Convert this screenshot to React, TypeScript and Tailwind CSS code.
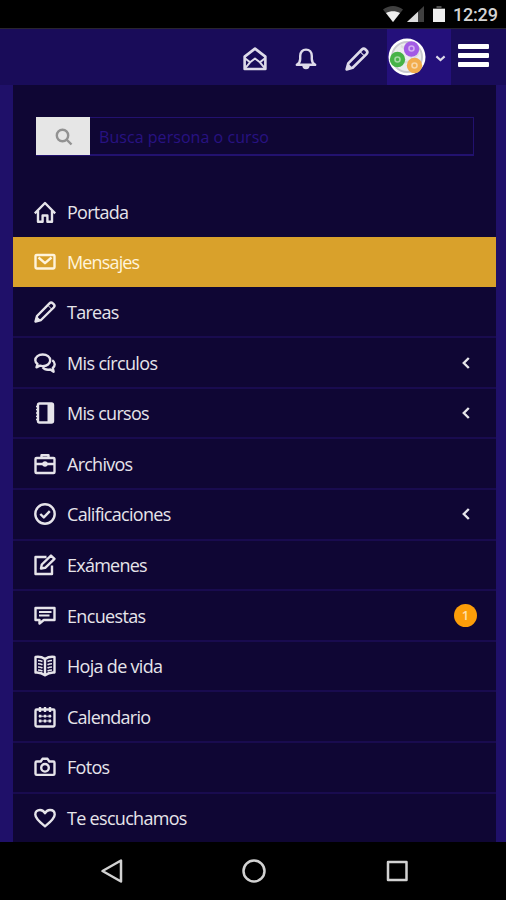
import type { ReactNode } from "react";

type IconName =
  | "home" | "mail" | "pencil" | "chats" | "notebook" | "briefcase" | "check"
  | "edit" | "comment" | "book" | "calendar" | "camera" | "heart" | "mailOpen" | "bell";

const shapes: Record<IconName, ReactNode> = {
  home: (
    <>
      <path d="M.8 12.300 11 2l10.200 10.300" />
      <path d="M4 10v10.700h4.600v-6.200h4.800v6.200H18V10" />
    </>
  ),
  mail: (
    <>
      <rect x="1.500" y="4" width="19" height="13.500" rx="1.200" />
      <path d="m4.500 6.500 6.500 5.700 6.500-5.700" />
    </>
  ),
  pencil: (
    <>
      <path d="M1.500 20.500 3 15 15.500 2.300c1-1 2.300-1 3.300 0l.9.900c1 1 1 2.300 0 3.300L7 19Z" />
      <path d="m14 4.500 3.500 3.500" strokeWidth="1" />
      <path d="m1.500 20.500 1.200-5 3.800 3.800Z" fill="currentColor" strokeWidth="1" />
    </>
  ),
  chats: (
    <>
      <path d="M8.700 2.500c4.300 0 7.500 2.500 7.500 5.800s-3.200 5.800-7.500 5.800c-1 0-1.800-.1-2.700-.4l-3.500 1.600 1-3.300C2.100 11 1.300 9.700 1.300 8.300c0-3.300 3.200-5.800 7.400-5.800Z" />
      <path d="M18.200 8.300c1.600 1 2.500 2.400 2.500 4 0 1.500-.7 2.700-1.900 3.700l.8 3.700-3.300-2.200c-3.200.6-6.200-.3-7.700-2.200" />
    </>
  ),
  notebook: (
    <>
      <rect x="4" y="1.500" width="15" height="19" rx="1.500" />
      <path d="M13.500 2h5v18h-5Z" fill="currentColor" stroke="none" />
      <path d="M2 4.500h3M2 7.700h3M2 11h3M2 14.300h3M2 17.500h3" strokeWidth="1.300" />
    </>
  ),
  briefcase: (
    <>
      <rect x="1.500" y="5" width="19" height="15" rx="1" />
      <path d="M7.500 5V2.300h7V5M2 11h18" />
      <circle cx="11" cy="11" r="2.700" fill="currentColor" stroke="none" />
    </>
  ),
  check: (
    <>
      <circle cx="11" cy="11" r="9.700" />
      <path d="m6.300 11 3.500 3.400 6-6.300" />
    </>
  ),
  edit: (
    <>
      <path d="M12.500 3h-11v17h16.500v-8.500" />
      <path d="m7 14.500.8-4L17 1.600l3.500 3.200-9.300 9Z" />
    </>
  ),
  comment: (
    <>
      <path d="M1.500 3h19v12H9.800L5.500 18.500V15h-4Z" />
      <path d="M5 7h12.500M5 10.500h10.500" strokeWidth="1.800" />
    </>
  ),
  book: (
    <>
      <path d="M11 4C8 2 4.500 1.500 1.500 2v15.500c3-.3 6.500.4 9.500 2.800 3-2.400 6.500-3.100 9.500-2.800V2C17.500 1.500 14 2 11 4Z" />
      <path d="M11 4v16" />
      <path d="M4 5.500c1.500 0 3 .3 4.500 1M4 8.800c1.500 0 3 .3 4.500 1M4 12c1.500 0 3 .3 4.500 1M4 15c1.500 0 3 .3 4.500 1M18 5.500c-1.500 0-3 .3-4.500 1M18 8.800c-1.500 0-3 .3-4.500 1M18 12c-1.500 0-3 .3-4.500 1M18 15c-1.500 0-3 .3-4.500 1" strokeWidth="1.600" />
    </>
  ),
  calendar: (
    <>
      <rect x="1.500" y="3.500" width="19" height="17" rx="1.200" />
      <path d="M6 1v5M11 1v5M16 1v5" />
      <path d="M5 10.200h12M5 15h12" strokeWidth="2.800" strokeDasharray="2.400 2.400" />
      <path d="M4.500 10.200h13M4.500 15h13" strokeWidth="1" />
    </>
  ),
  camera: (
    <>
      <path d="M2.700 5.500h4L8.500 2.800h5l1.800 2.700h4q1.200 0 1.200 1.200v11q0 1.200-1.200 1.200H2.700q-1.200 0-1.200-1.200v-11q0-1.200 1.200-1.200Z" />
      <circle cx="11" cy="11.800" r="3.800" />
    </>
  ),
  heart: (
    <path d="M11 19.300C7 16 1.300 11.800 1.300 7.500c0-2.800 2-4.500 4.700-4.500 2.200 0 4 1.300 5 3.300C12 4.300 13.800 3 16 3c2.700 0 4.700 1.700 4.700 4.500 0 4.300-5.700 8.500-9.700 11.800Z" />
  ),
  mailOpen: (
    <>
      <path d="M1.500 8.800 11 1.500l9.500 7.300v11.400H1.500Z" />
      <path d="m1.500 10 5 4L11 10.500l4.500 3.500 5-4M1.500 20l5-6M20.500 20l-5-6" strokeWidth="1.800" />
    </>
  ),
  bell: (
    <>
      <path d="M1.800 16.800c2.500-1.500 3.400-2.800 3.400-5.800V8c0-3.900 2.300-6.400 5.800-6.400s5.800 2.500 5.800 6.400v3c0 3 .9 4.300 3.400 5.800Z" />
      <path d="M8.500 17.500a2.500 2.500 0 0 0 5 0Z" fill="currentColor" />
    </>
  ),
};

function Icon({ name, className = "size-[22px]" }: { name: IconName; className?: string }) {
  return (
    <svg viewBox="0 0 22 22" className={`${className} shrink-0`} fill="none" stroke="currentColor" strokeWidth="2.4" strokeLinejoin="round">
      {shapes[name]}
    </svg>
  );
}

const items: { icon: IconName; label: string; tracking: string; active?: boolean; arrow?: boolean; badge?: number }[] = [
  { icon: "home", label: "Portada", tracking: "tracking-[-0.75px]" },
  { icon: "mail", label: "Mensajes", tracking: "tracking-[-0.85px]", active: true },
  { icon: "pencil", label: "Tareas", tracking: "tracking-[-0.75px]" },
  { icon: "chats", label: "Mis círculos", tracking: "tracking-[-0.65px]", arrow: true },
  { icon: "notebook", label: "Mis cursos", tracking: "tracking-[-0.7px]", arrow: true },
  { icon: "briefcase", label: "Archivos", tracking: "tracking-[-0.75px]" },
  { icon: "check", label: "Calificaciones", tracking: "tracking-[-0.7px]", arrow: true },
  { icon: "edit", label: "Exámenes", tracking: "tracking-[-0.75px]" },
  { icon: "comment", label: "Encuestas", tracking: "tracking-[-0.65px]", badge: 1 },
  { icon: "book", label: "Hoja de vida", tracking: "tracking-[-0.7px]" },
  { icon: "calendar", label: "Calendario", tracking: "tracking-[-0.75px]" },
  { icon: "camera", label: "Fotos", tracking: "tracking-[-0.7px]" },
  { icon: "heart", label: "Te escuchamos", tracking: "tracking-[-0.7px]" },
];

function StatusBar() {
  return (
    <div className="flex h-7 shrink-0 items-center justify-end bg-black pr-2 text-[#d4d4d4]">
      <svg viewBox="0 0 64 18" className="mr-[-2px] h-[18px] w-16">
        <path d="M0 4.500C6-.3 14-.3 20 4.500L10 17Z" fill="#404040" />
        <path d="M3 8C7-.5 13-.5 17 8L10 17Z" fill="#404040" />
        <path d="M3 8C7.500 5.500 12.500 5.500 17 8L10 17Z" fill="#eee" />
        <path d="M41 1v16H24Z" fill="#404040" />
        <path d="M35 6.800V17H24Z" fill="#ddd" />
        <path d="M53.500 1h5v2H62v3H50V3h3.500Z" fill="#505050" />
        <path d="M50 4h12v13H50Z" fill="#eee" />
      </svg>
      <span className="ml-2 w-[45px] pt-0.5 font-['Roboto'] text-[18px] leading-7 font-medium tracking-[-0.2px] whitespace-nowrap">12:29</span>
    </div>
  );
}

function Avatar() {
  return (
    <svg viewBox="0 0 38 38" className="size-[38px] shrink-0">
      <circle cx="19" cy="19" r="18.500" fill="#fff" />
      <circle cx="19" cy="19" r="15" fill="#ececef" stroke="#c9c9cf" strokeWidth="2" />
      <path d="M13 8c6 3 10 8 12 17M31 15c-5 7-9 9-18 10" fill="none" stroke="#ddd" strokeWidth="2" />
      <circle cx="23.500" cy="11" r="7.700" fill="#a35be5" />
      <circle cx="9.500" cy="21.500" r="7.700" fill="#47b347" />
      <circle cx="26.500" cy="27.500" r="7.700" fill="#f2ad4d" />
      <g fill="none" stroke="#fff" strokeOpacity=".5" strokeWidth="1.600">
        <circle cx="23.500" cy="10.500" r="2.500" />
        <circle cx="9.500" cy="21.500" r="2.500" />
        <circle cx="26.500" cy="27.500" r="2.500" />
      </g>
    </svg>
  );
}

function Header() {
  return (
    <header className="flex h-[57px] shrink-0 items-stretch justify-end border-t border-[#29252f] bg-[#190c59] text-[#dedbea]">
      <div className="mr-[18px] flex items-center gap-[27px] pt-1">
        <Icon name="mailOpen" className="size-6" />
        <Icon name="bell" className="size-6 px-px" />
        <Icon name="pencil" className="size-6" />
      </div>
      <div className="flex w-[64px] items-center gap-[9px] bg-[#24107b] pl-px">
        <Avatar />
        <svg viewBox="0 0 12 8" className="mt-[3px] w-[11px] shrink-0" fill="none" stroke="currentColor" strokeWidth="2.200">
          <path d="m1.500 1.500 4.500 4 4.500-4" />
        </svg>
      </div>
      <div className="flex w-[55px] flex-col gap-1 pt-[15px] pl-[7px]">
        <i className="h-[5px] w-[31px] rounded-[1px] bg-white" />
        <i className="h-[5px] w-[31px] rounded-[1px] bg-white" />
        <i className="h-[5px] w-[31px] rounded-[1px] bg-white" />
      </div>
    </header>
  );
}

function SearchBox() {
  return (
    <div className="mt-8 mr-[22px] ml-[23px] flex h-[39px] shrink-0 border border-b-2 border-[#22116f]">
      <div className="-mt-px -ml-px flex h-[38px] w-[54px] items-center justify-center bg-[#e6e6e6]">
        <svg viewBox="0 0 18 18" className="mt-0.5 ml-0.5 size-[18px]" fill="none" stroke="#929292" strokeWidth="2.400">
          <circle cx="7.500" cy="7.500" r="5.700" />
          <path d="m11.500 11.500 5 5" />
        </svg>
      </div>
      <span className="pl-[9px] text-[16px] leading-[38px] tracking-[0.050px] whitespace-nowrap text-[#281282]">Busca persona o curso</span>
    </div>
  );
}

export default function App() {
  return (
    <div className="flex h-[900px] w-[506px] flex-col overflow-hidden bg-[#1f1069] font-['Open_Sans',sans-serif]">
      <StatusBar />
      <Header />
      <main className="mr-[10px] ml-[13px] flex h-[757px] shrink-0 flex-col overflow-hidden bg-[#0f0634]">
        <SearchBox />
        <nav className="mt-[30.500px] flex flex-col">
          {items.map((item, i) => (
            <div
              key={item.label}
              className={`flex shrink-0 items-center pr-[19px] pl-[21px] ${
                item.active ? "mb-[0.600px] h-[50px] bg-[#d9a12b] pb-px text-[#fff4dc]" : "h-[50.600px] text-[#e6e4ea]"
              } ${i > 1 ? "border-b-2 border-[#190b4f]" : ""}`}
            >
              <Icon name={item.icon} />
              <span className={`ml-[11px] text-[18px] leading-6 whitespace-nowrap ${item.tracking}`}>{item.label}</span>
              {item.arrow && (
                <svg viewBox="0 0 8 12" className="mr-[7px] ml-auto h-3 w-2" fill="none" stroke="currentColor" strokeWidth="2.400">
                  <path d="M6.800 1 1.800 6l5 5" />
                </svg>
              )}
              {item.badge && (
                <span className="ml-auto flex size-[23px] items-center justify-center rounded-full bg-[#fc9d09] text-[13px] font-semibold text-[#ffe0ad]">
                  {item.badge}
                </span>
              )}
            </div>
          ))}
        </nav>
      </main>
      <footer className="flex h-[58px] shrink-0 items-center bg-black pl-[100px]">
        <svg viewBox="0 0 310 26" className="h-[26px] w-[310px]" fill="none" stroke="#d2d2d2" strokeWidth="2.500" strokeLinejoin="round">
          <path d="M21 2.500v21L2.500 13Z" />
          <circle cx="154" cy="13" r="10.500" />
          <rect x="288" y="4" width="18.500" height="18" />
        </svg>
      </footer>
    </div>
  );
}
